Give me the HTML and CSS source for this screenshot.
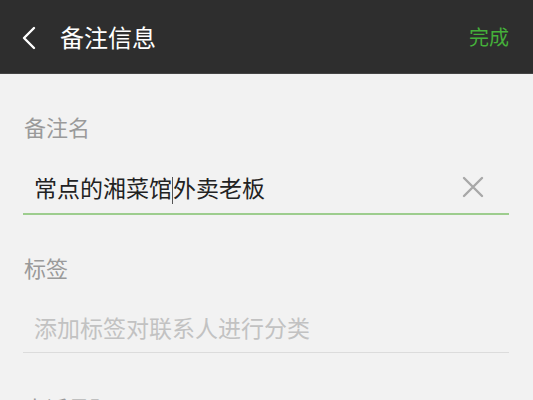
FILE: index.html
```html
<!DOCTYPE html>
<html lang="zh-CN">
<head>
  <meta charset="UTF-8" />
  <meta name="viewport" content="width=device-width, initial-scale=1.0"/>
  <title>备注信息</title>
  <link rel="stylesheet" href="styles.css">
</head>
<body>
  <div class="topbar">
    <svg class="back" width="16" height="24" viewBox="0 0 16 24">
      <polyline points="13,2 3,12 13,22" fill="none" stroke="#fff" stroke-width="2.4" stroke-linecap="round" stroke-linejoin="round"/>
    </svg>
    <div class="title">备注信息</div>
    <div class="done">完成</div>
  </div>

  <div class="content">
    <div class="label">备注名</div>
    <div class="field active">
      <span class="value">常点的湘菜馆<span class="cursor"></span>外卖老板</span>
      <svg class="clear" width="22" height="22" viewBox="0 0 22 22">
        <path d="M2 2 L20 20 M20 2 L2 20" stroke="#a8a8a8" stroke-width="2.4" stroke-linecap="round"/>
      </svg>
    </div>

    <div class="label">标签</div>
    <div class="field">
      <span class="placeholder">添加标签对联系人进行分类</span>
    </div>

    <div class="label next">电话号码</div>
  </div>
</body>
</html>
```

FILE: styles.css
```css
body {
  margin: 0;
  background-color: #f2f2f2;
  font-family: "Noto Sans CJK SC", "Noto Sans", sans-serif;
  overflow: hidden;
}

.topbar {
  height: 73px;
  background-color: #2e2e2e;
  border-bottom: 1px solid #444;
  display: flex;
  align-items: center;
  padding: 0 24px 0 21px;
}

.back {
  margin-top: 2px;
}

.title {
  color: #fff;
  font-size: 24px;
  margin-left: 23px;
  flex: 1;
}

.done {
  color: #45b03a;
  font-size: 20px;
}

.content {
  padding: 0 24px 0 23px;
}

.label {
  color: #9a9a9a;
  font-size: 22px;
  line-height: 30px;
  padding-left: 1px;
  margin-top: 37px;
}

.label.next {
  margin-top: 39px;
}

.field {
  height: 50px;
  display: flex;
  align-items: center;
  padding: 0 25px 0 11px;
  margin-top: 20px;
  border-bottom: 1px solid #dcdcdc;
}

.field.active {
  height: 52px;
  border-bottom: 2px solid #9dcd8e;
}

.value {
  flex: 1;
  color: #222;
  font-size: 23px;
}

.cursor {
  display: inline-block;
  width: 1px;
  height: 27px;
  background-color: #555;
  vertical-align: middle;
}

.placeholder {
  color: #c2c2c2;
  font-size: 23px;
}
```
